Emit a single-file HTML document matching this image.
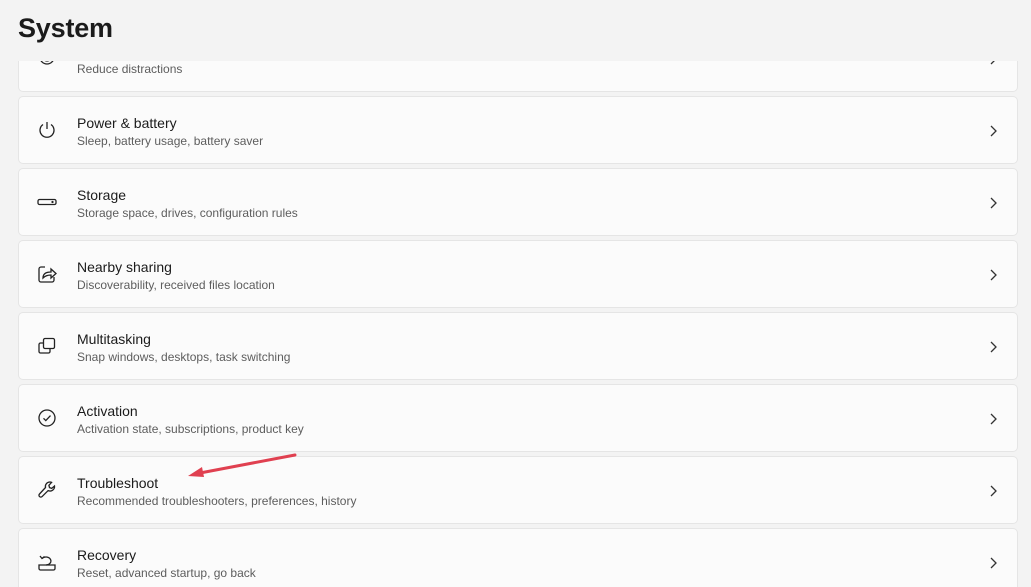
<!DOCTYPE html>
<html><head><meta charset="utf-8"><style>
body{margin:0;width:1031px;height:587px;overflow:hidden;background:#f3f3f3;font-family:"Segoe UI","Liberation Sans",sans-serif;color:#1b1b1b;position:relative}
h1{position:absolute;left:18px;top:13px;margin:0;font-size:27px;font-weight:600;letter-spacing:-0.2px;color:#1b1b1b}
.wrap{position:absolute;left:0;top:61px;width:1031px;height:526px;overflow:hidden}
.card{position:absolute;left:18px;width:998px;height:66px;background:#fbfbfb;border:1px solid #e5e5e5;border-radius:5px}
.t{position:absolute;left:58px;top:18px;font-size:14px;color:#1b1b1b}
.s{position:absolute;left:58px;top:37px;font-size:12px;color:#5d5d5d}
.ic{position:absolute;left:18px;top:23px;width:20px;height:20px}
.ch{position:absolute;left:968px;top:28px;width:12px;height:12px}
</style></head><body>
<h1>System</h1>
<div class="wrap">
<div class="card" style="top:-37px"><svg class="ic" viewBox="0 0 20 20" style="top:22px" fill="none" stroke="#222" stroke-width="1.3"><circle cx="10" cy="10" r="7"/><circle cx="10" cy="10" r="4"/></svg><div class="s">Reduce distractions</div><svg class="ch" viewBox="0 0 12 12" fill="none" stroke="#333" stroke-width="1.3"><path d="M4 1l5 5-5 5"/></svg></div>

<div class="card" style="top:35px"><svg class="ic" viewBox="0 0 20 20" fill="none" stroke="#222" stroke-width="1.3"><path d="M10 2v7"/><path d="M6 4.5a7 7 0 1 0 8 0"/></svg><div class="t">Power &amp; battery</div><div class="s">Sleep, battery usage, battery saver</div><svg class="ch" viewBox="0 0 12 12" fill="none" stroke="#333" stroke-width="1.3"><path d="M4 1l5 5-5 5"/></svg></div>

<div class="card" style="top:107px"><svg class="ic" viewBox="0 0 20 20" fill="none" stroke="#222" stroke-width="1.3"><rect x="1" y="7.5" width="18" height="5" rx="1.5"/><circle cx="15.5" cy="10" r=".5" fill="#222"/></svg><div class="t">Storage</div><div class="s">Storage space, drives, configuration rules</div><svg class="ch" viewBox="0 0 12 12" fill="none" stroke="#333" stroke-width="1.3"><path d="M4 1l5 5-5 5"/></svg></div>

<div class="card" style="top:179px"><svg class="ic" viewBox="0 0 20 20" fill="none" stroke="#222" stroke-width="1.3"><path d="M8 3H4a2 2 0 0 0-2 2v11a2 2 0 0 0 2 2h11a2 2 0 0 0 2-2v-3"/><path d="M6 14c0-4 3-6 8-6V5l5 4.5-5 4.5v-3c-3 0-6 1-8 3z"/></svg><div class="t">Nearby sharing</div><div class="s">Discoverability, received files location</div><svg class="ch" viewBox="0 0 12 12" fill="none" stroke="#333" stroke-width="1.3"><path d="M4 1l5 5-5 5"/></svg></div>

<div class="card" style="top:251px"><svg class="ic" viewBox="0 0 20 20" fill="none" stroke="#222" stroke-width="1.3"><rect x="6.5" y="2.5" width="11" height="10" rx="1.5"/><path d="M6.5 7H3.5a1.5 1.5 0 0 0-1.5 1.5v7A1.5 1.5 0 0 0 3.5 17h8a1.5 1.5 0 0 0 1.5-1.5v-3"/></svg><div class="t">Multitasking</div><div class="s">Snap windows, desktops, task switching</div><svg class="ch" viewBox="0 0 12 12" fill="none" stroke="#333" stroke-width="1.3"><path d="M4 1l5 5-5 5"/></svg></div>

<div class="card" style="top:323px"><svg class="ic" viewBox="0 0 20 20" fill="none" stroke="#222" stroke-width="1.3"><circle cx="10" cy="10" r="8"/><path d="M6.5 10.3l2.3 2.3 4.7-5"/></svg><div class="t">Activation</div><div class="s">Activation state, subscriptions, product key</div><svg class="ch" viewBox="0 0 12 12" fill="none" stroke="#333" stroke-width="1.3"><path d="M4 1l5 5-5 5"/></svg></div>

<div class="card" style="top:395px"><svg class="ic" viewBox="0 0 20 20" fill="none" stroke="#222" stroke-width="1.3"><path d="M13 2a4.5 4.5 0 0 0-4.5 5.5L2.5 14a1.8 1.8 0 0 0 2.6 2.6l6-6A4.5 4.5 0 0 0 17.5 6l-2.8 2.4-2.2-.8-.6-2.3L14.6 2.4A4.5 4.5 0 0 0 13 2z"/></svg><div class="t">Troubleshoot</div><div class="s">Recommended troubleshooters, preferences, history</div><svg class="ch" viewBox="0 0 12 12" fill="none" stroke="#333" stroke-width="1.3"><path d="M4 1l5 5-5 5"/></svg></div>

<div class="card" style="top:467px"><svg class="ic" viewBox="0 0 20 20" fill="none" stroke="#222" stroke-width="1.3"><path d="M2 13h16v3.5a1.5 1.5 0 0 1-1.5 1.5h-13A1.5 1.5 0 0 1 2 16.5z"/><path d="M5 6.5a5 4 0 1 1 4 6.5"/><path d="M3 4l2 2.5 2.5-2"/></svg><div class="t">Recovery</div><div class="s">Reset, advanced startup, go back</div><svg class="ch" viewBox="0 0 12 12" fill="none" stroke="#333" stroke-width="1.3"><path d="M4 1l5 5-5 5"/></svg></div>
</div>
<svg style="position:absolute;left:0;top:0" width="1031" height="587"><line x1="295" y1="455" x2="200" y2="473" stroke="#e04050" stroke-width="3" stroke-linecap="round"/><path d="M188 476l14-9 2 10z" fill="#e04050"/></svg>
</body></html>
